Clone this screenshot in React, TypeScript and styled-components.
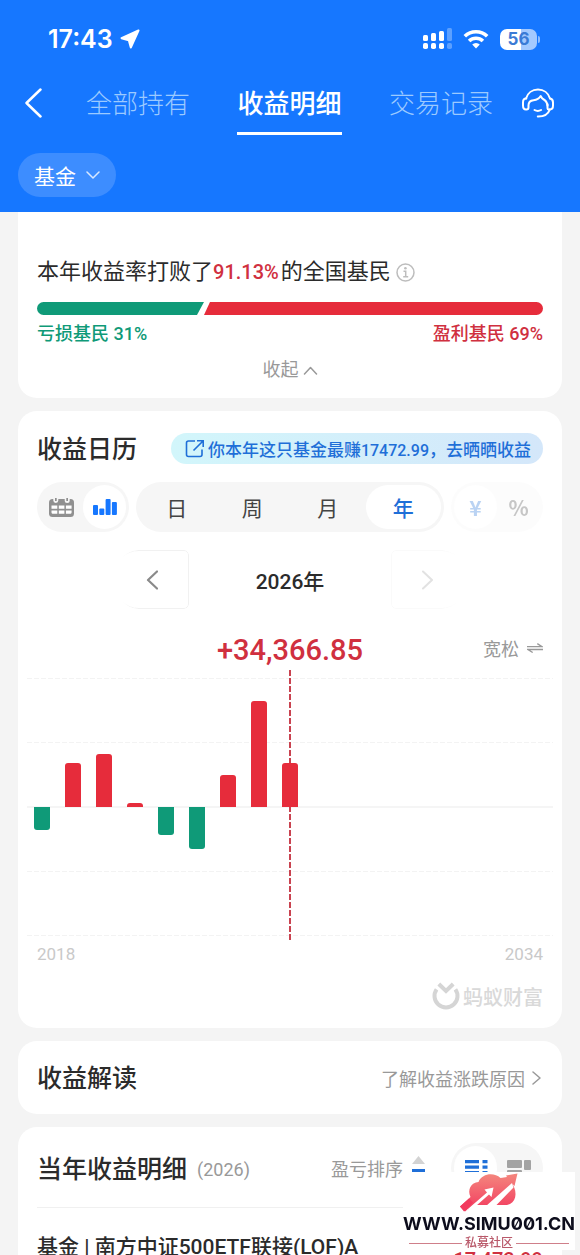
import React from 'react';
import styled, { createGlobalStyle, css } from 'styled-components';

const color = {
  blue: '#1677ff',
  link: '#1f6fd8',
  red: '#e62c3b',
  redText: '#d0303f',
  green: '#0f9a78',
  ink: '#2b2b2b',
  grey: '#999999',
  pale: '#c9c9c9',
  track: '#f6f6f6',
};

const GlobalStyle = createGlobalStyle`
  * { box-sizing: border-box; }
  body {
    margin: 0;
    background: #f4f4f4;
    color: ${color.ink};
    font-family: Roboto, 'Noto Sans CJK SC', sans-serif;
    font-size: 18px;
  }
  button {
    border: 0;
    padding: 0;
    background: none;
    color: inherit;
    font: inherit;
    cursor: pointer;
  }
  a { color: inherit; text-decoration: none; }
  h2, p { margin: 0; }
  svg { display: block; flex: none; }
`;

const Page = styled.div`
  display: flex;
  flex-direction: column;
  height: 100vh;
  overflow: hidden;
`;

/* Header */

const Header = styled.header`
  flex: none;
  padding: 0 18px 15px;
  background: ${color.blue};
  color: #fff;
`;

const StatusBar = styled.div`
  display: flex;
  align-items: center;
  justify-content: space-between;
  height: 78px;
  padding: 0 22px 0 30px;
`;

const Clock = styled.div`
  display: flex;
  align-items: center;
  gap: 7px;
  font: 600 25px/30px Inter, sans-serif;
`;

const StatusIcons = styled.div`
  display: flex;
  align-items: center;
  gap: 11px;
`;

const Battery = styled.div`
  display: flex;
  align-items: center;
  gap: 1px;
`;

const BatteryBody = styled.div`
  width: 37px;
  border-radius: 7px;
  background: linear-gradient(90deg, #fff 56%, #a3c9ff 56%);
  color: #3a7bd5;
  font: 700 17px/21px Inter, sans-serif;
  text-align: center;
`;

const BatteryTip = styled.div`
  width: 2px;
  height: 7px;
  border-radius: 0 2px 2px 0;
  background: #8fbdff;
`;

const NavRow = styled.nav`
  display: flex;
  align-items: flex-start;
  padding: 6px 8px 0 6px;
`;

const IconButton = styled.button`
  display: flex;
  align-items: center;
  height: 38px;
`;

const Tabs = styled.div`
  display: flex;
  flex: 1;
  justify-content: space-between;
  margin: 0 29px 0 44px;
`;

const Tab = styled.a<{ $active?: boolean }>`
  padding-bottom: 8px;
  border-bottom: 3px solid ${(p) => (p.$active ? '#fff' : 'transparent')};
  color: ${(p) => (p.$active ? '#fff' : '#9ccaff')};
  font-size: 26px;
  font-weight: ${(p) => (p.$active ? 500 : 300)};
  line-height: 40px;
`;

const FilterPill = styled.button`
  display: flex;
  align-items: center;
  gap: 10px;
  height: 44px;
  margin-top: 18px;
  padding: 0 16px;
  border-radius: 22px;
  background: #3d8dff;
  font-size: 21px;

  svg { opacity: 0.8; }
`;

/* Cards */

const Content = styled.main`
  display: flex;
  flex: 1;
  flex-direction: column;
  gap: 13px;
  min-height: 0;
  padding: 0 18px;
  overflow: hidden auto;
  scrollbar-width: none;
`;

const Card = styled.section`
  flex: none;
  padding: 0 19px;
  border-radius: 19px;
  background: #fff;
`;

const RankCard = styled(Card)`
  padding-top: 44px;
  padding-bottom: 15px;
  border-radius: 0 0 19px 19px;
`;

const CalendarCard = styled(Card)`
  padding-top: 22px;
  padding-bottom: 18px;
`;

const InsightCard = styled(Card)`
  display: flex;
  align-items: center;
  justify-content: space-between;
  min-height: 73px;
`;

const DetailCard = styled(Card)`
  padding-top: 16px;
  padding-bottom: 24px;
`;

const Row = styled.div`
  display: flex;
  align-items: center;
  justify-content: space-between;
`;

const Title = styled.h2`
  padding-top: 2px;
  font-size: 25px;
  font-weight: 500;
  line-height: 29px;
`;

const RankText = styled.p`
  display: flex;
  align-items: center;
  font-size: 22px;
  line-height: 32px;

  strong {
    margin-right: 2px;
    color: ${color.redText};
    font-size: 20px;
    font-weight: 500;
  }

  button { margin-left: 5px; }
`;

const RatioBar = styled.div`
  display: flex;
  height: 13px;
  margin-top: 14px;
  border-radius: 7px;
  overflow: hidden;
`;

const LossPart = styled.div`
  flex: 33;
  background: ${color.green};
  clip-path: polygon(0 0, 100% 0, calc(100% - 7px) 100%, 0 100%);
`;

const GainPart = styled.div`
  flex: 67;
  background: ${color.red};
  clip-path: polygon(6px 0, 100% 0, 100% 100%, 0 100%);
`;

const RatioLabels = styled(Row)`
  margin-top: 6px;
  line-height: 26px;
`;

const RatioLabel = styled.span<{ $gain?: boolean }>`
  color: ${(p) => (p.$gain ? color.redText : color.green)};
  font-weight: 500;
`;

const Collapse = styled.button`
  display: flex;
  align-items: center;
  gap: 4px;
  margin: 10px auto 0;
  color: ${color.grey};
  line-height: 26px;
`;

const SharePill = styled.a`
  display: flex;
  align-items: center;
  gap: 3px;
  height: 31px;
  padding: 0 12px 0 14px;
  border-radius: 16px;
  background: linear-gradient(90deg, #d2f6fb, #d4e7fa);
  color: ${color.link};
  font-size: 17px;
  font-weight: 500;
  white-space: nowrap;
`;

const ShareAmount = styled.span`
  font-size: 16px;
`;

const Controls = styled.div`
  display: flex;
  gap: 7px;
  margin-top: 18px;
`;

const Segment = styled.div<{ $wide?: boolean; $faded?: boolean }>`
  display: flex;
  flex: ${(p) => (p.$wide ? '1' : '0 0 92px')};
  height: 50px;
  padding: 3px;
  border-radius: 25px;
  background: ${color.track};
  opacity: ${(p) => (p.$faded ? 0.3 : 1)};
`;

const SegmentButton = styled.button<{ $active?: boolean; $strong?: boolean }>`
  display: flex;
  flex: 1;
  align-items: center;
  justify-content: center;
  border-radius: 22px;
  color: #444;
  font-size: 21px;
  ${(p) =>
    p.$active &&
    css`
      background: #fff;
      color: ${color.link};
      font-weight: 500;
    `}
  ${(p) =>
    p.$strong &&
    css`
      font-family: 'Noto Sans CJK SC', sans-serif;
      font-weight: 700;
    `}
`;

const YearNav = styled.div`
  display: flex;
  align-items: center;
  justify-content: center;
  margin-top: 18px;
`;

const YearLabel = styled.span`
  width: 202px;
  font-size: 21px;
  font-weight: 500;
  text-align: center;
`;

const StepButton = styled.button<{ $next?: boolean }>`
  display: flex;
  align-items: center;
  justify-content: center;
  width: 74px;
  height: 59px;
  border: 1px solid ${(p) => (p.$next ? '#fafafa' : '#f1f1f1')};
  border-radius: ${(p) => (p.$next ? '5px 24px 24px 5px' : '24px 5px 5px 24px')};
  color: ${(p) => (p.$next ? '#e2e2e2' : '#8a8a8a')};
  mask-image: linear-gradient(${(p) => (p.$next ? '270deg' : '90deg')}, transparent 8px, #000 22px);
`;

const AmountRow = styled.div`
  display: grid;
  grid-template-columns: 1fr auto 1fr;
  align-items: center;
  margin-top: 21px;
`;

const Amount = styled.span`
  grid-column: 2;
  color: ${color.redText};
  font-size: 29px;
  font-weight: 500;
  line-height: 40px;
`;

const Density = styled.button`
  display: flex;
  align-items: center;
  justify-self: end;
  gap: 8px;
  padding-bottom: 4px;
  color: ${color.grey};
`;

const ChartFrame = styled.div`
  margin: 0 -10px;

  svg {
    width: 100%;
    height: auto;
  }
`;

const Years = styled(Row)`
  margin-top: 2px;
  color: ${color.pale};
  font-size: 17px;
  line-height: 20px;
`;

const Brand = styled.div`
  display: flex;
  align-items: center;
  justify-content: flex-end;
  gap: 3px;
  height: 28px;
  margin-top: 18px;
  color: #d9d9d9;
  font-size: 20px;
  font-weight: 500;
`;

const MoreLink = styled.a`
  display: flex;
  align-items: center;
  gap: 7px;
  padding-right: 2px;
  color: ${color.grey};
`;

const DetailTitle = styled.div`
  display: flex;
  flex: 1;
  align-items: center;
  gap: 10px;
`;

const YearNote = styled.span`
  padding-top: 2px;
  color: ${color.grey};
`;

const Sort = styled.button`
  display: flex;
  align-items: center;
  gap: 9px;
  margin-right: 26px;
  color: ${color.grey};
`;

const Holding = styled.div`
  display: flex;
  align-items: flex-start;
  justify-content: space-between;
  margin-top: 14px;
  padding-top: 24px;
  border-top: 1px solid #f0f0f0;
`;

const HoldingName = styled.span`
  font-size: 21px;
  font-weight: 500;
  line-height: 30px;
`;

const HoldingAmount = styled.span`
  padding-top: 13px;
  color: ${color.redText};
  font-size: 20px;
  font-weight: 500;
  line-height: 30px;
`;

/* Site badge in the corner */

const Badge = styled.aside`
  position: fixed;
  right: 5px;
  bottom: 5px;
  display: flex;
  flex-direction: column;
  align-items: center;
  width: 172px;
  background: #fff;
`;

const BadgeSite = styled.div`
  color: #0d0d1c;
  font: 700 18px/24px Inter, sans-serif;
  font-feature-settings: 'zero' 1;
  white-space: nowrap;
`;

const BadgeName = styled.div`
  display: flex;
  align-items: center;
  align-self: stretch;
  gap: 3px;
  padding: 0 6px;
  color: #b9596a;
  font-size: 12px;
  font-weight: 500;
  line-height: 14px;

  &::before,
  &::after {
    content: '';
    flex: 1;
    height: 1px;
    background: #cf7f8a;
  }
`;

type ChevronProps = { d: string; w: number; h: number; stroke?: number };

const Chevron = ({ d, w, h, stroke = 1.5 }: ChevronProps) => (
  <svg width={w} height={h} viewBox={`0 0 ${w} ${h}`} fill="none" stroke="currentColor" strokeWidth={stroke} strokeLinecap="round" strokeLinejoin="round">
    <path d={d} />
  </svg>
);

const LocationIcon = () => (
  <svg width="20" height="20" viewBox="0 0 20 20" fill="#fff" stroke="#fff" strokeWidth="2" strokeLinejoin="round">
    <path d="M18.500 1.500 1.500 9.200 8.800 11.200 10.800 18.500Z" />
  </svg>
);

const SignalIcon = () => (
  <svg width="29" height="22" viewBox="0 0 29 22" fill="#fff">
    <rect x="0" y="7" width="5" height="6" rx="1.500" />
    <rect x="8" y="5" width="5" height="8" rx="1.500" />
    <rect x="16" y="3" width="5" height="10" rx="1.500" />
    <rect x="24" y="0" width="5" height="13" rx="1.500" opacity=".3" />
    <rect x="0" y="15" width="5" height="6" rx="1.800" />
    <rect x="8" y="15" width="5" height="6" rx="1.800" />
    <rect x="16" y="15" width="5" height="6" rx="1.800" />
    <rect x="24" y="15" width="5" height="6" rx="1.800" opacity=".3" />
  </svg>
);

const WifiIcon = () => (
  <svg width="26" height="20" viewBox="0 0 26 20" fill="none" stroke="#fff" strokeWidth="3.600">
    <path d="M1.800 7.300a16 16 0 0 1 22.400 0" />
    <path d="M6.100 12a10 10 0 0 1 13.800 0" />
    <path d="M13 19.400 9.200 15.600a5.400 5.400 0 0 1 7.600 0Z" fill="#fff" stroke="none" />
  </svg>
);

const ServiceIcon = () => (
  <svg width="32" height="30" viewBox="0 0 32 30" fill="none" stroke="#fff" strokeWidth="2" strokeLinecap="round" strokeLinejoin="round">
    <path d="M4 10.500C5.500 5 10.300 1.500 16 1.500S26.500 5 28 10.500" />
    <path d="M4.300 10.500H4C2 10.500 1 12 1 14.500v3C1 20 2 21.500 4 21.500h.5c1.300 0 2-.7 2-2v-2.200c0-3.300 2-4.800 5-5.100 3.300-.3 5.700-1.600 7.200-4.200.7 1.300 1.200 2.200 2.300 3 2.700 1.300 4 3.200 4.500 6.500" />
    <path d="M28 10.500c2 .3 3 1.800 3 4v3c0 2.400-1 3.900-3 4h-1.300c-.8 0-1.200-.5-1.200-1.300v-4" />
    <path d="M27.800 21.500C26.300 26 22 28.600 15.800 28.500" />
    <path d="M12.500 22c2.200 1.300 4.400 1.300 6.600 0" />
  </svg>
);

const InfoIcon = () => (
  <svg width="19" height="19" viewBox="0 0 19 19" fill="none" stroke="#bdbdbd" strokeWidth="1.500">
    <circle cx="9.500" cy="9.500" r="8.500" />
    <path d="M7.500 8.200h2.200v5.300M7.200 13.700h5" />
    <circle cx="9.400" cy="5.300" r="1.300" fill="#bdbdbd" stroke="none" />
  </svg>
);

const ShareIcon = () => (
  <svg width="20" height="20" viewBox="0 0 20 20" fill="none" stroke={color.link} strokeWidth="1.600">
    <path d="M10 2H3.500C2 2 1.500 2.600 1.500 4v11.500c0 1.400.6 2 2 2H15c1.400 0 2-.6 2-2V10.500" />
    <path d="M12 1.800h6.200V8M18 2l-9.500 9.500" />
  </svg>
);

const CalendarIcon = () => (
  <svg width="25" height="19" viewBox="0 0 25 19">
    <rect x="0" y="1" width="25" height="18" rx="3.500" fill="#909090" />
    <path d="M4.300 0h5v2.500a2.500 2.500 0 0 1-5 0ZM15.700 0h5v2.500a2.500 2.500 0 0 1-5 0Z" fill={color.track} />
    <path d="M6 0h1.700v3H6ZM17.300 0H19v3h-1.700Z" fill="#909090" />
    <path d="M2.500 7.500h5.800v3.300H2.500ZM9.800 7.500h5.600v3.300H9.800ZM16.900 7.500h5.700v3.300h-5.700ZM2.500 12.500h5.800v3.300H4.200c-1 0-1.700-.6-1.700-1.600ZM9.800 12.500h5.600v3.300H9.800ZM16.900 12.500h5.700v1.700c0 1-.7 1.600-1.700 1.600h-4Z" fill="#fff" />
  </svg>
);

const BarsIcon = () => (
  <svg width="24" height="16" viewBox="0 0 24 16" fill={color.blue}>
    <rect x="0" y="6" width="5" height="10" rx="1" />
    <rect x="6.300" y="9.500" width="5" height="6.500" rx="1" />
    <rect x="12.600" y="0" width="5" height="16" rx="1" />
    <rect x="18.900" y="3" width="5" height="13" rx="1" />
  </svg>
);

const SwapIcon = () => (
  <svg width="16" height="10" viewBox="0 0 16 10" fill="none" stroke="#999" strokeWidth="1.300">
    <path d="M0 3.600h15L10.300.6M16 6.500H1l4.700 3" />
  </svg>
);

const BrandIcon = () => (
  <svg width="28" height="28" viewBox="0 0 28 28" fill="none" stroke="#d5d5d5">
    <path d="M4.600 7.300A11.500 11.500 0 1 0 23.400 7.300" strokeWidth="4" />
    <path d="m6.800 2 7.200 7L21.200 2" strokeWidth="4" />
  </svg>
);

const SortIcon = () => (
  <svg width="13" height="24" viewBox="0 0 13 24">
    <path d="M6.500 0 13 8H0Z" fill="#d3d3d3" />
    <path d="M0 13h13v3L6.500 24 0 16Z" fill={color.link} />
  </svg>
);

const ListIcon = () => (
  <svg width="24" height="16" viewBox="0 0 24 16" fill={color.link}>
    <path d="M1 0h14v3.200H1ZM18.500 0h5v3.200h-5ZM1 5.500h14v3.200H1ZM18.500 5.500h5v3.200h-5ZM1 11h14v3.200H1ZM18.500 11h5v3.200h-5Z" />
  </svg>
);

const BlocksIcon = () => (
  <svg width="24" height="16" viewBox="0 0 24 16" fill="#a3a3a3">
    <rect x="0" y="0" width="15" height="8" rx="1" />
    <rect x="17" y="0" width="7" height="10" rx="1" />
    <rect x="0" y="10" width="15" height="6" rx="1" />
    <rect x="17" y="12" width="7" height="4" rx="1" />
  </svg>
);

const CloudLogo = () => (
  <svg width="60" height="40" viewBox="0 0 60 40">
    <defs>
      <linearGradient id="cloud" x1="0" y1="0" x2="0" y2="1">
        <stop offset="0" stopColor="#f4877e" />
        <stop offset="1" stopColor="#f23a5e" />
      </linearGradient>
    </defs>
    <path
      fill="url(#cloud)"
      d="M1 34.500 11.500 25C8 18 12 10.500 19.500 10 23 1.500 35 0 41.500 6L48 5 47 3.500 58.500 1.500 55.500 14 53.500 12C59 21 57 31.500 48 33H16L6 39.500Z"
    />
    <path fill="#fff" d="M6 39.500 28 20.500 25.500 17.500 34.500 15.500 32.500 25 30 22.500 17.500 33.500ZM27 34 53 11 54.500 15.500 37 33.500Z" />
    <path fill="#f23a5e" d="M1 34.500 10 26.500 14 30.500 5 39.500Z" />
  </svg>
);

/* Yearly profit, in chart units above or below the axis */
const yearly = [-23, 44, 53, 4, -28, -42, 32, 106, 44];
const AXIS = 137;
const selected = 8;

const barPath = (x: number, v: number) => {
  const s = v < 0 ? -1 : 1;
  const r = Math.min(3, Math.abs(v));
  const top = AXIS - v;
  return `M${x} ${AXIS}V${top + s * r}Q${x} ${top} ${x + r} ${top}H${x + 16 - r}Q${x + 16} ${top} ${x + 16} ${top + s * r}V${AXIS}Z`;
};

const YearChart = () => (
  <ChartFrame>
    <svg viewBox="0 0 526 272" role="img" aria-label="年度收益柱状图">
      {[8, 72, 201, 265].map((y) => (
        <path key={y} d={`M0 ${y}.5H526`} stroke="#f3f3f3" strokeDasharray="5 2" />
      ))}
      <path d={`M0 ${AXIS}H526`} stroke="#ebebeb" />
      <path d={`M${14 + selected * 31 + 1} 0V272`} stroke="#c94350" strokeWidth="2" strokeDasharray="6 2" />
      {yearly.map((v, i) => (
        <path key={i} d={barPath(7 + i * 31, v)} fill={v < 0 ? color.green : color.red} />
      ))}
    </svg>
  </ChartFrame>
);

export default function App() {
  return (
    <Page>
      <GlobalStyle />
      <Header>
        <StatusBar>
          <Clock>
            17:43
            <LocationIcon />
          </Clock>
          <StatusIcons>
            <SignalIcon />
            <WifiIcon />
            <Battery>
              <BatteryBody>56</BatteryBody>
              <BatteryTip />
            </Battery>
          </StatusIcons>
        </StatusBar>
        <NavRow>
          <IconButton aria-label="返回">
            <Chevron w={18} h={30} d="M16.500 1.500 2.500 15 16.500 28.500" stroke={2.5} />
          </IconButton>
          <Tabs>
            <Tab href="#all">全部持有</Tab>
            <Tab href="#profit" $active>收益明细</Tab>
            <Tab href="#trades">交易记录</Tab>
          </Tabs>
          <IconButton aria-label="客服">
            <ServiceIcon />
          </IconButton>
        </NavRow>
        <FilterPill>
          基金
          <Chevron w={14} h={8} d="M1 1 7 7 13 1" />
        </FilterPill>
      </Header>

      <Content>
        <RankCard>
          <RankText>
            本年收益率打败了<strong>91.13%</strong>的全国基民
            <button aria-label="说明">
              <InfoIcon />
            </button>
          </RankText>
          <RatioBar>
            <LossPart />
            <GainPart />
          </RatioBar>
          <RatioLabels>
            <RatioLabel>亏损基民 31%</RatioLabel>
            <RatioLabel $gain>盈利基民 69%</RatioLabel>
          </RatioLabels>
          <Collapse>
            收起
            <Chevron w={15} h={9} d="M1.500 8 7.500 1.500 13.500 8" />
          </Collapse>
        </RankCard>

        <CalendarCard>
          <Row>
            <Title>收益日历</Title>
            <SharePill href="#share">
              <ShareIcon />
              <span>
                你本年这只基金最赚<ShareAmount>17472.99</ShareAmount>，去晒晒收益
              </span>
            </SharePill>
          </Row>
          <Controls>
            <Segment>
              <SegmentButton aria-label="日历">
                <CalendarIcon />
              </SegmentButton>
              <SegmentButton aria-label="柱状图" $active>
                <BarsIcon />
              </SegmentButton>
            </Segment>
            <Segment $wide>
              <SegmentButton>日</SegmentButton>
              <SegmentButton>周</SegmentButton>
              <SegmentButton>月</SegmentButton>
              <SegmentButton $active>年</SegmentButton>
            </Segment>
            <Segment $faded>
              <SegmentButton $active $strong>¥</SegmentButton>
              <SegmentButton $strong>%</SegmentButton>
            </Segment>
          </Controls>
          <YearNav>
            <StepButton aria-label="上一年">
              <Chevron w={12} h={20} d="M11 1.500 2 10 11 18.500" stroke={2.2} />
            </StepButton>
            <YearLabel>2026年</YearLabel>
            <StepButton aria-label="下一年" $next disabled>
              <Chevron w={12} h={20} d="M1 1.500 10 10 1 18.500" stroke={2} />
            </StepButton>
          </YearNav>
          <AmountRow>
            <Amount>+34,366.85</Amount>
            <Density>
              宽松
              <SwapIcon />
            </Density>
          </AmountRow>
          <YearChart />
          <Years>
            <span>2018</span>
            <span>2034</span>
          </Years>
          <Brand>
            <BrandIcon />
            蚂蚁财富
          </Brand>
        </CalendarCard>

        <InsightCard>
          <Title>收益解读</Title>
          <MoreLink href="#reason">
            了解收益涨跌原因
            <Chevron w={9} h={14} d="M1 1 8 7 1 13" />
          </MoreLink>
        </InsightCard>

        <DetailCard>
          <Row>
            <DetailTitle>
              <Title>当年收益明细</Title>
              <YearNote>(2026)</YearNote>
            </DetailTitle>
            <Sort>
              盈亏排序
              <SortIcon />
            </Sort>
            <Segment>
              <SegmentButton aria-label="列表" $active>
                <ListIcon />
              </SegmentButton>
              <SegmentButton aria-label="色块">
                <BlocksIcon />
              </SegmentButton>
            </Segment>
          </Row>
          <Holding>
            <HoldingName>基金 | 南方中证500ETF联接(LOF)A</HoldingName>
            <HoldingAmount>17,472.99</HoldingAmount>
          </Holding>
        </DetailCard>
      </Content>

      <Badge>
        <CloudLogo />
        <BadgeSite>WWW.SIMU001.CN</BadgeSite>
        <BadgeName>私募社区</BadgeName>
      </Badge>
    </Page>
  );
}
